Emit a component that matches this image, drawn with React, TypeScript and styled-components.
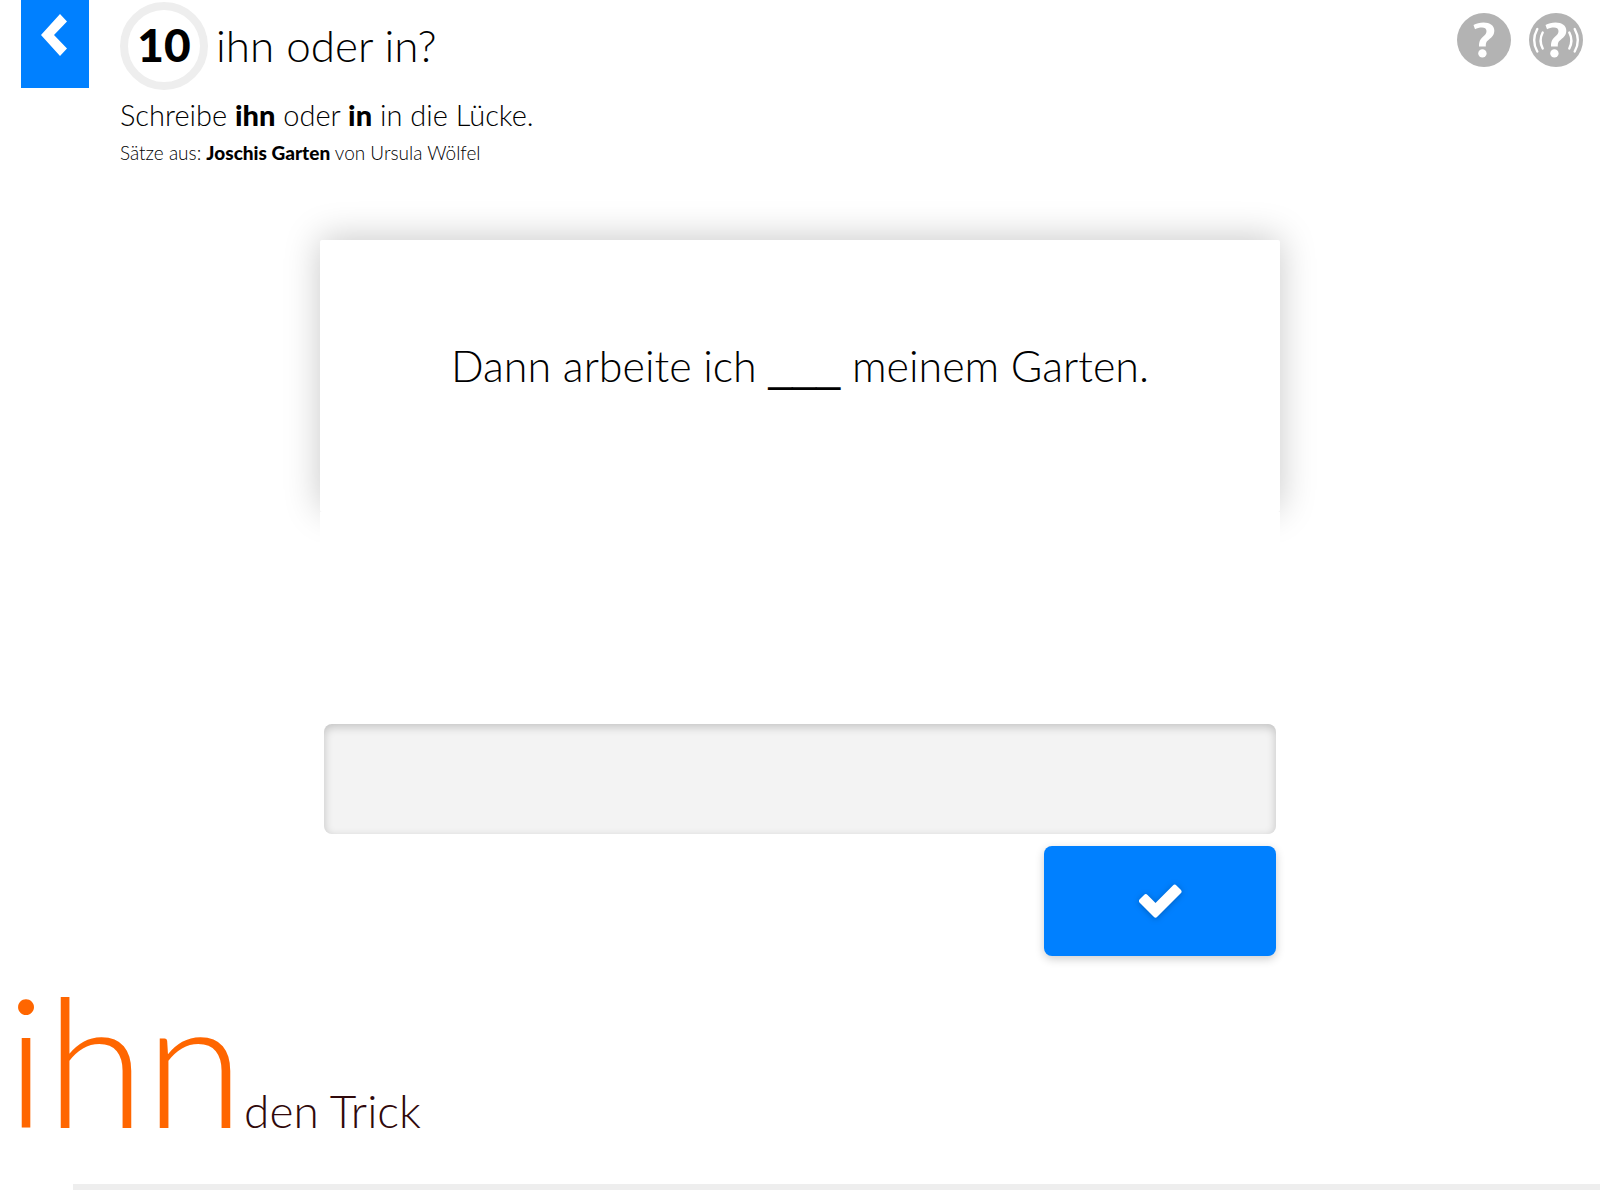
import React from "react";
import styled, { createGlobalStyle } from "styled-components";

const GlobalStyle = createGlobalStyle`
  *, *::before, *::after { box-sizing: border-box; }
  html, body, #root { height: 100%; }
  body {
    margin: 0;
    background: #fff;
    color: #000;
    font-family: Lato, "Open Sans", sans-serif;
    font-weight: 300;
  }
  h1, p { margin: 0; font-weight: 300; }
  b { font-weight: 900; }
  button { border: 0; padding: 0; cursor: pointer; }
`;

const Page = styled.div`
  display: flex;
  flex-direction: column;
  min-height: 100%;
`;

const Header = styled.header`
  display: flex;
  align-items: flex-start;
  padding: 0 17px 0 21px;
`;

const BackButton = styled.button`
  display: flex;
  justify-content: center;
  width: 68px;
  height: 88px;
  padding-top: 14px;
  background: #0080ff;
`;

const Intro = styled.div`
  flex: 1;
  margin-left: 31px;
  padding-top: 2px;
`;

const Title = styled.h1`
  display: flex;
  align-items: center;
  gap: 8px;
  font-size: 44px;
  line-height: 54px;
`;

const TitleText = styled.span`
  padding-bottom: 2px;
`;

const Badge = styled.span`
  display: flex;
  align-items: center;
  justify-content: center;
  width: 88px;
  height: 88px;
  padding-bottom: 2px;
  border: 8px solid #eee;
  border-radius: 50%;
  font-size: 46px;
  font-weight: 900;
`;

const Task = styled.p`
  padding-top: 5px;
  font-size: 29px;
  line-height: 40px;
`;

const Source = styled.p`
  font-size: 19px;
  line-height: 36px;
`;

const HelpGroup = styled.div`
  display: flex;
  gap: 18px;
  padding-top: 13px;
`;

const HelpButton = styled.button`
  width: 54px;
  height: 54px;
  border-radius: 50%;
  background: #b3b3b3;
`;

const Exercise = styled.main`
  width: 60%;
  margin: 69px auto 0;
`;

const Card = styled.section`
  position: relative;
  min-height: 272px;
  padding: 96px 40px 0;
  border-radius: 2px;
  background: #fff;
  box-shadow: 0 -2px 36px rgba(0, 0, 0, 0.22);
  text-align: center;
  font-size: 43px;
  line-height: 60px;

  &::after {
    content: "";
    position: absolute;
    top: 100%;
    left: 0;
    right: 0;
    height: 48px;
    background: #fff;
  }
`;

const Blank = styled.span`
  font-family: "Liberation Sans", Arial, sans-serif;
`;

const AnswerForm = styled.form`
  display: flex;
  flex-direction: column;
  align-items: flex-end;
  gap: 12px;
  margin-top: 212px;
  padding: 0 4px;
`;

const AnswerInput = styled.input`
  width: 100%;
  height: 110px;
  padding: 0 24px;
  border: 0;
  border-radius: 8px;
  outline: 0;
  background: #f3f3f3;
  box-shadow: inset 0 3px 10px rgba(0, 0, 0, 0.2);
  font: inherit;
  font-size: 44px;
`;

const CheckButton = styled.button`
  display: flex;
  align-items: center;
  justify-content: center;
  width: 232px;
  height: 110px;
  border-radius: 8px;
  background: #0080ff;
  box-shadow: 0 3px 10px rgba(0, 0, 0, 0.2);

  svg {
    overflow: visible;
    filter: drop-shadow(0 1px 3px rgba(0, 0, 0, 0.25));
  }
`;

const Footer = styled.footer`
  margin-top: auto;
  padding-bottom: 10px;
`;

const Trick = styled.p`
  display: flex;
  align-items: baseline;
  padding: 0 0 36px 6px;
  color: #30090b;
  font-size: 46px;
  line-height: 60px;
`;

const TrickWord = styled.span`
  color: #f60;
  font-size: 180px;
  line-height: 180px;
`;

const Progress = styled.div`
  display: flex;
`;

const Step = styled.span<{ $open: boolean }>`
  flex: 1;
  height: 6px;
  background: ${(p) => (p.$open ? "#eee" : "transparent")};
`;

const steps = Array.from({ length: 22 }, (_, i) => i);

const QuestionMark = () => (
  <>
    <path
      d="M16.5 12C19 10.5 23 9.500 26.500 9.500C33 9.500 37.300 12.500 37.300 17.500C37.300 22 35 24 32 26.500C29.800 28.300 28.800 29 28.800 33.500H22C22 28.500 23 26.500 26 23.800C28.500 21.500 29.500 20.300 29.500 18C29.500 15.500 27.500 14.500 25 14.500C22.500 14.500 20 15.200 18 16.200Z"
      fill="#fff"
    />
    <circle cx="25.4" cy="40.4" r="4.2" fill="#fff" />
  </>
);

export default function App() {
  return (
    <>
      <GlobalStyle />
      <Page>
        <Header>
          <BackButton aria-label="Zurück">
            <svg width="28" height="42" viewBox="0 0 28 42">
              <path d="M19 0L26 7.500L13 21L26 34.500L19 42L0 21Z" fill="#fff" />
            </svg>
          </BackButton>
          <Intro>
            <Title>
              <Badge>10</Badge>
              <TitleText>ihn oder in?</TitleText>
            </Title>
            <Task>Schreibe <b>ihn</b> oder <b>in</b> in die Lücke.</Task>
            <Source>Sätze aus: <b>Joschis Garten</b> von Ursula Wölfel</Source>
          </Intro>
          <HelpGroup>
            <HelpButton aria-label="Hilfe">
              <svg width="54" height="54" viewBox="0 0 54 54"><QuestionMark /></svg>
            </HelpButton>
            <HelpButton aria-label="Hilfe vorlesen">
              <svg width="54" height="54" viewBox="0 0 54 54">
                <QuestionMark />
                <path
                  d="M8.300 16Q2 27.500 8.300 38.500M13.700 19.500Q9.500 27.500 13.700 35.500M40.300 19.500Q44.500 27.500 40.300 35.500M45.700 16Q52 27.500 45.700 38.500"
                  fill="none"
                  stroke="#fff"
                  strokeWidth="2.400"
                  strokeLinecap="round"
                />
              </svg>
            </HelpButton>
          </HelpGroup>
        </Header>
        <Exercise>
          <Card>Dann arbeite ich <Blank>___</Blank> meinem Garten.</Card>
          <AnswerForm onSubmit={(e) => e.preventDefault()}>
            <AnswerInput type="text" aria-label="Antwort" autoComplete="off" />
            <CheckButton type="submit" aria-label="Prüfen">
              <svg width="42" height="34" viewBox="0 0 42 34">
                <path
                  d="M2.500 17L6.800 12.700L16.500 22.400L35.700 3.200L40 7.500L16.500 31Z"
                  fill="#fff"
                  stroke="#fff"
                  strokeWidth="5"
                  strokeLinejoin="round"
                />
              </svg>
            </CheckButton>
          </AnswerForm>
        </Exercise>
        <Footer>
          <Trick><TrickWord>ihn</TrickWord>den Trick</Trick>
          <Progress>
            {steps.map((i) => <Step key={i} $open={i > 0} />)}
          </Progress>
        </Footer>
      </Page>
    </>
  );
}
